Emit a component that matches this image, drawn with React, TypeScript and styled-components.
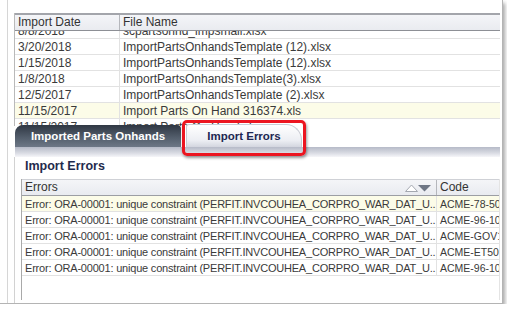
import React from 'react';
import styled, { createGlobalStyle } from 'styled-components';

const GlobalStyle = createGlobalStyle`
  html, body {
    margin: 0;
    padding: 0;
    background: #fff;
    overflow: hidden;
  }
  body {
    font-family: 'Liberation Sans', Arial, sans-serif;
    font-size: 11px;
    color: #333;
  }
`;

const Frame = styled.div`
  width: 502px;
  height: 303px;
  background: #fff;
  border-right: 1px solid #b4b4b4;
  border-bottom: 1px solid #b4b4b4;
  box-shadow: 2px 3px 4px rgba(0, 0, 0, 0.35);
`;

const Gutter = styled.div`
  height: 100%;
  box-sizing: border-box;
  margin-left: 7px;
  border-left: 1px solid #d6d6d6;
  padding: 0 2px 0 6px;
  display: flex;
  flex-direction: column;
`;

const TopTable = styled.div`
  margin-top: 13px;
  height: 113px;
  display: flex;
  flex-direction: column;
  border-left: 1px solid #b9b9b9;
  flex-shrink: 0;
`;

const HeadRow = styled.div<{ $cols: string; $strong?: boolean }>`
  display: grid;
  grid-template-columns: ${(p) => p.$cols};
  flex-shrink: 0;
  height: 15px;
  line-height: 15px;
  background: linear-gradient(#f4f5f8, #e9ebf0);
  border-top: ${(p) => (p.$strong ? '2px solid #a3a5ab' : '1px solid #cfd1d6')};
  border-bottom: ${(p) => (p.$strong ? '1px solid #8d8f95' : '1px solid #9c9ea4')};
  color: #333;
  font-size: 12px;
`;

const HeadCell = styled.div<{ $last?: boolean }>`
  padding-left: 3px;
  border-right: ${(p) => (p.$last ? 'none' : '1px solid #b5b7bc')};
  display: flex;
  align-items: center;
  white-space: nowrap;
  overflow: hidden;
`;

const Clip = styled.div`
  flex: 1;
  overflow: hidden;
`;

const Body = styled.div<{ $offset?: number }>`
  margin-top: ${(p) => p.$offset ?? 0}px;
`;

const Row = styled.div<{ $cols: string; $hl?: boolean }>`
  display: grid;
  grid-template-columns: ${(p) => p.$cols};
  height: 15px;
  line-height: 16px;
  border-bottom: 1px solid #e2e2e2;
  background: ${(p) => (p.$hl ? '#fcfce8' : '#fff')};
`;

const Cell = styled.div<{ $last?: boolean; $size?: number; $tight?: boolean }>`
  padding-left: 3px;
  white-space: nowrap;
  overflow: hidden;
  color: #3a3a3a;
  font-size: ${(p) => p.$size ?? 11}px;
  letter-spacing: ${(p) => (p.$tight ? '-0.2px' : 'normal')};
  border-right: ${(p) => (p.$last ? 'none' : '1px solid #e2e2e2')};
`;

const Bottom = styled.div`
  flex: 1;
  display: flex;
  flex-direction: column;
  margin-top: -1px;
  margin-left: 1px;
`;

const TabBar = styled.div`
  display: flex;
  align-items: flex-end;
  height: 22px;
  gap: 5px;
  flex-shrink: 0;
`;

const Tab = styled.div<{ $active?: boolean }>`
  position: relative;
  height: ${(p) => (p.$active ? '23px' : '22px')};
  box-sizing: border-box;
  display: flex;
  align-items: center;
  justify-content: center;
  font-weight: bold;
  font-size: 11.5px;
  width: ${(p) => (p.$active ? '116px' : '166px')};
  border-radius: ${(p) => (p.$active ? '3px 16px 0 0' : '8px 4px 0 0')};
  color: ${(p) => (p.$active ? '#1d2752' : '#fff')};
  background: ${(p) =>
    p.$active
      ? 'linear-gradient(#ffffff, #eceef3 70%, #d3d6df)'
      : 'linear-gradient(#2f3743, #55606e 60%, #6d7786)'};
  border: ${(p) => (p.$active ? '1px solid #c9ccd4' : 'none')};
  border-bottom: none;
`;

const Highlight = styled.div`
  position: absolute;
  left: -5px;
  top: -5px;
  right: -5px;
  bottom: -9px;
  border: 3px solid #ec1520;
  border-radius: 5px;
  box-shadow: 1px 2px 3px rgba(0, 0, 0, 0.4);
  pointer-events: none;
`;

const Band = styled.div`
  height: 10px;
  flex-shrink: 0;
  background: linear-gradient(#b6bac8, #d9dbe3 60%, #f6f6f9);
`;

const Panel = styled.div`
  flex: 1;
  display: flex;
  flex-direction: column;
  padding: 0 0 3px 6px;
  border-left: 1px solid #d2d2d2;
  margin-left: -1px;
`;

const Heading = styled.div`
  height: 20px;
  line-height: 18px;
  padding-left: 4px;
  font-weight: bold;
  font-size: 12.5px;
  color: #1f2b4d;
`;

const ErrTable = styled.div`
  flex: 1;
  margin-top: 2px;
  border-left: 1px solid #a9a9a9;
  border-right: 1px solid #e4e4e4;
`;

const SortIcons = styled.span`
  margin-left: auto;
  margin-right: 5px;
  display: flex;
  align-items: center;
`;

const topCols = '105px 1fr';
const errCols = '415px 1fr';

const files = [
  ['8/8/2018', 'scpartsonhd_impsmall.xlsx'],
  ['3/20/2018', 'ImportPartsOnhandsTemplate (12).xlsx'],
  ['1/15/2018', 'ImportPartsOnhandsTemplate (12).xlsx'],
  ['1/8/2018', 'ImportPartsOnhandsTemplate(3).xlsx'],
  ['12/5/2017', 'ImportPartsOnhandsTemplate (2).xlsx'],
  ['11/15/2017', 'Import Parts On Hand 316374.xls'],
  ['11/15/2017', 'Import Parts On Hand.xlsx'],
];

const errMsg =
  'Error: ORA-00001: unique constraint (PERFIT.INVCOUHEA_CORPRO_WAR_DAT_U...';
const codes = ['ACME-78-50', 'ACME-96-10', 'ACME-GOV1', 'ACME-ET500', 'ACME-96-10'];

export default function App() {
  return (
    <>
      <GlobalStyle />
      <Frame>
        <Gutter>
          <TopTable>
            <HeadRow $cols={topCols} $strong>
              <HeadCell>Import Date</HeadCell>
              <HeadCell $last>File Name</HeadCell>
            </HeadRow>
            <Clip>
              <Body $offset={-8}>
                {files.map(([d, f], i) => (
                  <Row key={i} $cols={topCols} $hl={i === 5}>
                    <Cell $size={12}>{d}</Cell>
                    <Cell $size={12} $last>
                      {f}
                    </Cell>
                  </Row>
                ))}
              </Body>
            </Clip>
          </TopTable>
          <Bottom>
            <TabBar>
              <Tab>Imported Parts Onhands</Tab>
              <Tab $active>
                Import Errors
                <Highlight />
              </Tab>
            </TabBar>
            <Band />
            <Panel>
              <Heading>Import Errors</Heading>
              <ErrTable>
                <HeadRow $cols={errCols}>
                  <HeadCell>
                    Errors
                    <SortIcons>
                      <svg width="26" height="8" viewBox="0 0 26 8">
                        <path d="M0.5 7.5 L6.5 1 L12.5 7.5 Z" fill="#fff" stroke="#a4a8b0" />
                        <path d="M13 1 L26 1 L19.5 7.5 Z" fill="#6e7685" />
                      </svg>
                    </SortIcons>
                  </HeadCell>
                  <HeadCell $last>Code</HeadCell>
                </HeadRow>
                {codes.map((c, i) => (
                  <Row key={i} $cols={errCols} $hl={i === 0}>
                    <Cell $tight>{errMsg}</Cell>
                    <Cell $last $size={10.5}>
                      {c}
                    </Cell>
                  </Row>
                ))}
              </ErrTable>
            </Panel>
          </Bottom>
        </Gutter>
      </Frame>
    </>
  );
}
